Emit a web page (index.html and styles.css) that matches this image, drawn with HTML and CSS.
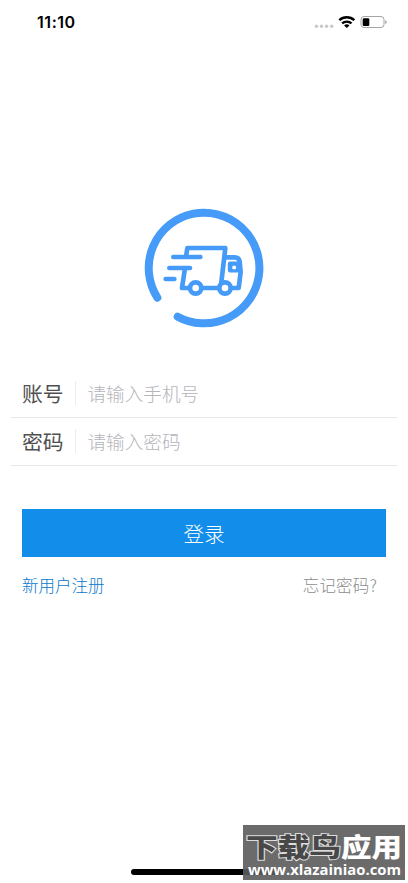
FILE: index.html
```html
<!DOCTYPE html>
<html lang="zh-CN">
<head>
<meta charset="utf-8">
<title>登录</title>
<link rel="stylesheet" href="styles.css">
</head>
<body>
<div class="screen">
  <header class="status">
    <span class="time">11:10</span>
    <svg class="status-icons" width="76" height="16" viewBox="0 0 76 16">
      <g fill="#c9c9cb"><circle cx="3.4" cy="12.2" r="1.7"/><circle cx="8.5" cy="12.2" r="1.7"/><circle cx="13.6" cy="12.2" r="1.7"/><circle cx="18.7" cy="12.2" r="1.7"/></g>
      <g fill="none" stroke="#000" stroke-width="2.4"><path d="M26.3 6.2a11 11 0 0 1 15 0"/><path d="M29.1 9.4a7 7 0 0 1 9.4 0"/></g>
      <path d="M31.1 11.4a4 4 0 0 1 5.4 0l-2.7 2.6z"/>
      <rect x="48" y="2.5" width="23" height="11" rx="3" fill="#fff" stroke="#a5a5a5"/>
      <rect x="49.7" y="4.2" width="6.6" height="7.8" rx="1.3"/>
      <path d="M72.2 6.2q1.6.5 1.6 1.9t-1.6 1.9z" fill="#a5a5a5"/>
    </svg>
  </header>
  <main>
    <svg class="logo" width="140" height="136" viewBox="-4 -1 420 408" fill="none" stroke="#459bf7" stroke-linecap="round" stroke-linejoin="round">
      <path stroke-width="24" d="M66 292A166 166 0 1 1 127 349"/>
      <g transform="translate(-3)">
        <g stroke-width="14">
          <path d="M155 170L159 143H273L259 263H208M152 203L143 263H163M117 170H198M105 203H167"/>
          <path d="M94 236H120"/>
          <path d="M273 171H301Q314 171 316 184L319 215 313 263H297"/>
          <circle cx="184" cy="263" r="17" fill="#fff"/><circle cx="272" cy="263" r="17" fill="#fff"/>
        </g>
        <rect x="284" y="187" width="32" height="26" rx="3" fill="#459bf7" stroke-width="7"/>
        <rect x="294" y="196" width="11" height="11" rx="3" fill="#fff" stroke="none"/>
      </g>
    </svg>
    <form class="fields">
      <label class="field"><span class="label">账号</span><input class="input" type="text" placeholder="请输入手机号"></label>
      <label class="field"><span class="label">密码</span><input class="input" type="password" placeholder="请输入密码"></label>
    </form>
    <button class="login" type="button">登录</button>
    <nav class="links"><a class="register">新用户注册</a><a class="forgot">忘记密码?</a></nav>
  </main>
  <div class="home-bar"></div>
  <aside class="badge">
    <svg width="162" height="55" viewBox="0 0 162 55">
      <g class="badge-title"><text class="dark" x="3" y="31.5" textLength="95" lengthAdjust="spacingAndGlyphs">下载鸟</text><text class="light" x="98" y="31.5" textLength="61" lengthAdjust="spacingAndGlyphs">应用</text></g>
      <text class="badge-url" x="5" y="49.5" textLength="153" lengthAdjust="spacingAndGlyphs">www.xlazainiao.com</text>
    </svg>
  </aside>
</div>
</body>
</html>
```
FILE: styles.css
```css
* { box-sizing: border-box; }
body {
  margin: 0;
  background: #fff;
  font-family: "Noto Sans CJK SC", sans-serif;
  font-weight: 300;
}
.screen {
  position: relative;
  width: 408px;
  height: 883px;
  overflow: hidden;
}
.status {
  display: flex;
  justify-content: space-between;
  align-items: center;
  height: 44px;
  padding: 0 19px 0 37px;
}
.time {
  font: 600 16px/20px Inter, sans-serif;
  letter-spacing: .55px;
}
main {
  display: flex;
  flex-direction: column;
  padding-top: 156px;
}
.logo { align-self: center; }
.fields {
  margin: 34px 11px 0;
}
.field {
  display: flex;
  align-items: center;
  height: 48px;
  padding: 0 0 2px 11px;
  border-bottom: 1px solid #e6e6e6;
}
.label {
  width: 54px;
  border-right: 1px solid #ededed;
  color: #505050;
  font-size: 20.8px;
  font-weight: 400;
  line-height: 24px;
}
.input {
  width: 280px;
  border: 0;
  padding: 0 0 0 11.5px;
  background: none;
  font: inherit;
  font-size: 18.6px;
  line-height: 24px;
}
.input::placeholder { color: #b4b4ba; }
.login {
  height: 48px;
  margin: 43px 22px 0;
  border: 0;
  padding: 0;
  background: #128eea;
  color: #fff;
  font: inherit;
  font-size: 20.6px;
}
.links {
  display: flex;
  justify-content: space-between;
  padding: 16px 31px 0 22px;
  font-size: 16.5px;
  line-height: 24px;
}
.register { color: #0878cc; }
.forgot { color: #8c8c8c; letter-spacing: .15px; }
.home-bar {
  position: absolute;
  left: 131px;
  top: 869px;
  width: 146px;
  height: 6px;
  border-radius: 3px;
  background: #000;
}
.badge {
  position: absolute;
  left: 243px;
  top: 825px;
  width: 162px;
  height: 55px;
  background: rgba(91, 91, 91, .9);
}
.badge svg { display: block; }
.badge-title {
  font-size: 26px;
  font-weight: 900;
}
.dark {
  fill: #484848;
  stroke: #ddd;
  stroke-width: 2px;
  paint-order: stroke;
}
.light { fill: #fff; }
.badge-url {
  fill: #fff;
  font: 700 13.5px "Open Sans", sans-serif;
}
```
